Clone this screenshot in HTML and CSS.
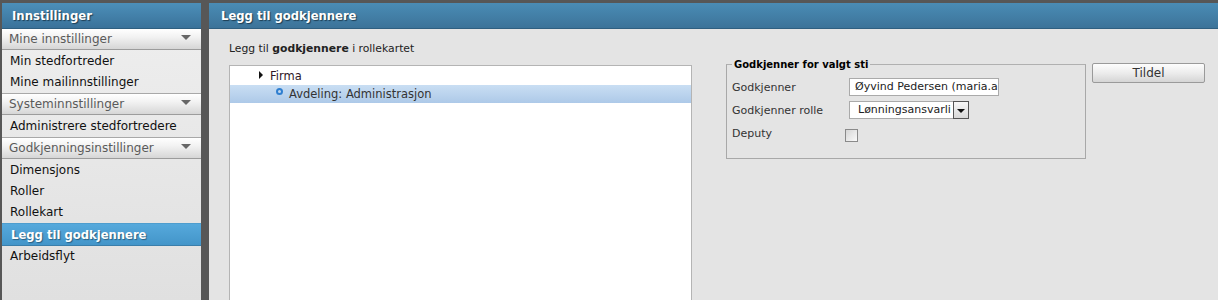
FILE: index.html
```html
<!DOCTYPE html>
<html>
<head>
<meta charset="utf-8">
<link rel="stylesheet" href="styles.css">
</head>
<body>
<div class="page">
  <aside class="side">
    <div class="side-head">Innstillinger</div>
    <div class="sec first"><span>Mine innstillinger</span><i class="caret"></i></div>
    <div class="group">
      <div class="item">Min stedfortreder</div>
      <div class="item">Mine mailinnstillinger</div>
    </div>
    <div class="sec"><span>Systeminnstillinger</span><i class="caret"></i></div>
    <div class="group">
      <div class="item">Administrere stedfortredere</div>
    </div>
    <div class="sec"><span>Godkjenningsinstillinger</span><i class="caret"></i></div>
    <div class="group">
      <div class="item">Dimensjons</div>
      <div class="item">Roller</div>
      <div class="item">Rollekart</div>
      <div class="item active">Legg til godkjennere</div>
      <div class="item">Arbeidsflyt</div>
    </div>
  </aside>
  <main class="main">
    <div class="main-head">Legg til godkjennere</div>
    <div class="main-body">
      <p class="intro">Legg til <b>godkjennere</b> i rollekartet</p>
      <div class="content">
        <div class="tree">
          <div class="node"><i class="tri"></i><span class="firma">Firma</span></div>
          <div class="node sel"><i class="dot"></i><span>Avdeling: Administrasjon</span></div>
        </div>
        <fieldset class="fs">
          <legend>Godkjenner for valgt sti</legend>
          <div class="row"><label>Godkjenner</label><div class="input">Øyvind Pedersen (maria.a</div></div>
          <div class="row"><label>Godkjenner rolle</label><div class="select"><span>Lønningsansvarli</span><i class="sbtn"><b></b></i></div></div>
          <div class="row"><label>Deputy</label><i class="check"></i></div>
        </fieldset>
        <button class="btn">Tildel</button>
      </div>
    </div>
  </main>
</div>
</body>
</html>
```

FILE: styles.css
```css
html, body { margin: 0; padding: 0; }
body {
  background: #575757;
  font-family: "DejaVu Sans", Verdana, sans-serif;
  height: 300px;
  overflow: hidden;
}
.page {
  display: flex;
  gap: 8px;
  padding: 3px 0 0 2px;
  height: 297px;
}
.side {
  width: 199px;
  flex: none;
  background: linear-gradient(#efefef, #e0e0e0);
  display: flex;
  flex-direction: column;
}
.side-head {
  height: 26px;
  line-height: 26px;
  padding-left: 10px;
  font-weight: bold;
  font-size: 11.7px;
  color: #fff;
  text-shadow: 1px 1px 1px #1d3d52;
  background: linear-gradient(#4c8fb9, #3a729a);
  border-bottom: 1px solid #2f5f80;
  box-sizing: border-box;
}
.sec {
  height: 22px;
  flex: none;
  box-sizing: border-box;
  border-top: 1px solid #a8a8a8;
  border-bottom: 1px solid #9c9c9c;
  background: linear-gradient(#ffffff, #f2f2f2 40%, #d6d6d6);
  display: flex;
  align-items: center;
  justify-content: space-between;
  padding: 0 10px 0 7px;
  font-size: 12px;
  color: #5a5a5a;
}
.sec.first { border-top: none; height: 21px; }
.caret {
  width: 0; height: 0;
  border-left: 5px solid transparent;
  border-right: 5px solid transparent;
  border-top: 5px solid #666;
  margin-top: -4px;
}
.group { padding-top: 1px; }
.item {
  height: 21px;
  line-height: 21px;
  padding-left: 8px;
  font-size: 12px;
  color: #111;
}
.item.active {
  height: 23px;
  line-height: 23px;
  box-sizing: border-box;
  padding-left: 9px;
  background: linear-gradient(#56a9dc, #4395c9);
  border-top: 1px solid #4e9dce;
  border-bottom: 1px solid #3a7eaa;
  font-weight: bold;
  font-size: 11.6px;
  color: #fff;
  text-shadow: 1px 1px 1px #2a5f80;
}
.main {
  flex: 1;
  background: #e4e4e4;
  display: flex;
  flex-direction: column;
}
.main-head {
  height: 26px;
  line-height: 26px;
  padding-left: 12px;
  font-weight: bold;
  font-size: 11.6px;
  color: #fff;
  text-shadow: 1px 1px 1px #1d3d52;
  background: linear-gradient(#4a8cb5, #3c7399);
  border-bottom: 1px solid #2f5f80;
  box-sizing: border-box;
}
.main-body {
  padding: 13px 0 0 20px;
  flex: 1;
  display: flex;
  flex-direction: column;
}
.intro {
  margin: 0;
  font-size: 10.8px;
  color: #222;
  line-height: 14px;
}
.content {
  display: flex;
  align-items: flex-start;
  margin-top: 9px;
  flex: 1;
}
.tree {
  width: 463px;
  box-sizing: border-box;
  align-self: stretch;
  background: #fff;
  border: 1px solid #b4b4b4;
  border-bottom: none;
  padding-top: 1px;
}
.node {
  height: 18px;
  display: flex;
  align-items: center;
  font-size: 11.5px;
  color: #333;
}
.node .firma { color: #2e1626; }
.tri {
  width: 0; height: 0;
  border-top: 4px solid transparent;
  border-bottom: 4px solid transparent;
  border-left: 4px solid #111;
  margin: -2px 7px 0 29px;
}
.node.sel {
  background: linear-gradient(#c9def3, #adc9e8);
}
.dot {
  width: 3px; height: 3px;
  border: 2px solid #2f7fd0;
  border-radius: 50%;
  margin: -5px 6px 0 46px;
}
.fs {
  margin: -6px 0 0 34px;
  padding: 6px 4px 14px 5px;
  width: 360px;
  box-sizing: border-box;
  border: 1px solid #a8a8a8;
  border-top-color: #b0b0b0;
  min-inline-size: 0;
}
.fs legend {
  padding: 0 2px;
  margin-left: 0;
  font-weight: bold;
  font-size: 10px;
  color: #000;
}
.row {
  display: flex;
  align-items: center;
  height: 22px;
}
.row + .row { margin-top: 1px; }
.row label {
  width: 117px;
  font-size: 11px;
  color: #333;
}
.input {
  width: 150px;
  height: 18px;
  box-sizing: border-box;
  background: #fff;
  border: 1px solid #aaa;
  font-size: 11px;
  line-height: 16px;
  padding-left: 5px;
  color: #222;
  overflow: hidden;
  white-space: nowrap;
}
.select {
  width: 120px;
  height: 18px;
  box-sizing: border-box;
  background: #fff;
  border: 1px solid #aaa;
  display: flex;
  font-size: 11px;
  line-height: 16px;
  color: #222;
}
.select span { flex: 1; padding-left: 8px; overflow: hidden; white-space: nowrap; }
.sbtn {
  width: 16px;
  box-sizing: border-box;
  border: 1px solid #555;
  background: linear-gradient(#f8f8f8, #d8d8d8);
  display: flex;
  align-items: center;
  justify-content: center;
  margin: -1px -1px -1px 0;
}
.sbtn b {
  width: 0; height: 0;
  border-left: 4px solid transparent;
  border-right: 4px solid transparent;
  border-top: 4px solid #111;
  margin-top: 2px;
}
.check {
  width: 13px; height: 13px;
  box-sizing: border-box;
  border: 1px solid #8a8a8a;
  background: linear-gradient(135deg, #d6d6d6, #fafafa);
  margin: 4px 0 0 -4px;
}
.btn {
  margin: -2px 0 0 6px;
  width: 113px;
  height: 20px;
  border: 1px solid #9a9a9a;
  border-radius: 2px;
  background: linear-gradient(#fdfdfd, #ececec 50%, #d5d5d5);
  font-family: "DejaVu Sans", Verdana, sans-serif;
  font-size: 12px;
  color: #333;
  padding: 0;
}
```
